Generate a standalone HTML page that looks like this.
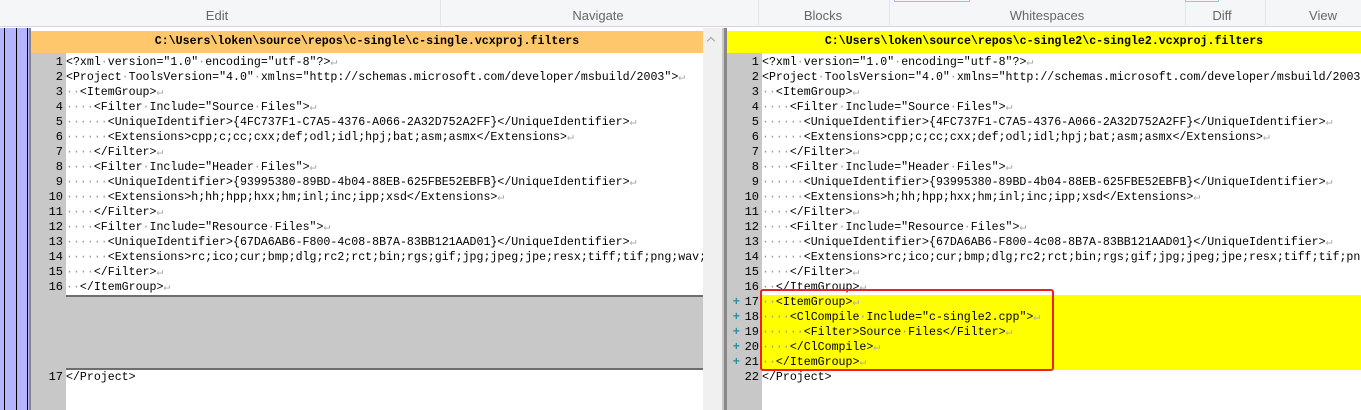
<!DOCTYPE html>
<html><head><meta charset="utf-8"><style>
*{margin:0;padding:0;box-sizing:border-box}
body{width:1361px;height:410px;overflow:hidden;background:#fff;position:relative;font-family:"Liberation Sans",sans-serif}
.tb{position:absolute;left:0;top:0;width:1361px;height:27px;background:#f5f6f7;border-bottom:1px solid #d5d5d5}
.tb span{position:absolute;top:8px;font-size:13px;color:#666;transform:translateX(-50%)}
.sep{position:absolute;top:0;width:1px;height:25px;background:#e2e3e4}
.code{position:absolute;font-family:"Liberation Mono",monospace;font-size:11.6px;line-height:15px;white-space:pre;color:#000}
.g{position:absolute;background:#c8c8c8}
.num{position:absolute;font-family:"Liberation Mono",monospace;font-size:12px;line-height:15px;text-align:right;white-space:pre;color:#000}
i{font-style:normal;color:#999}
b{font-weight:normal;color:#aaa}
.hd{position:absolute;height:22px;font-family:"Liberation Mono",monospace;font-weight:bold;font-size:11.6px;line-height:22px;text-align:center}
</style></head><body>
<div class="tb">
<span style="left:217px">Edit</span><span style="left:598px">Navigate</span><span style="left:823px">Blocks</span><span style="left:1047px">Whitespaces</span><span style="left:1222px">Diff</span><span style="left:1323px">View</span>
<div class="sep" style="left:440px"></div><div class="sep" style="left:758px"></div><div class="sep" style="left:889px"></div><div class="sep" style="left:1185px"></div><div class="sep" style="left:1265px"></div>
<div style="position:absolute;left:894px;top:0;width:76px;height:2px;border:1px solid #9fc0e8;border-top:none"></div>
<div style="position:absolute;left:1185px;top:0;width:34px;height:2px;border:1px solid #9fc0e8;border-top:none"></div>
</div>
<div style="position:absolute;left:0;top:28px;width:30px;height:382px;background:#b4b4ff"></div>
<div style="position:absolute;left:4px;top:28px;width:1px;height:382px;background:#000"></div>
<div style="position:absolute;left:16px;top:28px;width:1px;height:382px;background:#000"></div>
<div style="position:absolute;left:27px;top:28px;width:1px;height:382px;background:#000"></div>
<div style="position:absolute;left:29px;top:28px;width:2px;height:382px;background:#888"></div>
<div class="hd" style="left:31px;top:31px;width:672px;background:#ffc76b">C:\Users\loken\source\repos\c-single\c-single.vcxproj.filters</div>
<div class="g" style="left:31px;top:53px;width:35px;height:357px"></div>
<div class="g" style="left:66px;top:295px;width:637px;height:75px"></div>
<div style="position:absolute;left:66px;top:295px;width:637px;height:2px;background:#6e6e6e"></div>
<div style="position:absolute;left:66px;top:368px;width:637px;height:2px;background:#6e6e6e"></div>
<div class="num" style="left:31px;top:55px;width:32px">1
2
3
4
5
6
7
8
9
10
11
12
13
14
15
16</div>
<div class="num" style="left:31px;top:370px;width:32px">17</div>
<div style="position:absolute;left:66px;top:55px;width:637px;height:240px;overflow:hidden">
<div class="code" style="left:0;top:0">&lt;?xml<i>·</i>version="1.0"<i>·</i>encoding="utf-8"?&gt;<b>↵</b>
&lt;Project<i>·</i>ToolsVersion="4.0"<i>·</i>xmlns="http://schemas.microsoft.com/developer/msbuild/2003"&gt;<b>↵</b>
<i>··</i>&lt;ItemGroup&gt;<b>↵</b>
<i>····</i>&lt;Filter<i>·</i>Include="Source<i>·</i>Files"&gt;<b>↵</b>
<i>······</i>&lt;UniqueIdentifier&gt;{4FC737F1-C7A5-4376-A066-2A32D752A2FF}&lt;/UniqueIdentifier&gt;<b>↵</b>
<i>······</i>&lt;Extensions&gt;cpp;c;cc;cxx;def;odl;idl;hpj;bat;asm;asmx&lt;/Extensions&gt;<b>↵</b>
<i>····</i>&lt;/Filter&gt;<b>↵</b>
<i>····</i>&lt;Filter<i>·</i>Include="Header<i>·</i>Files"&gt;<b>↵</b>
<i>······</i>&lt;UniqueIdentifier&gt;{93995380-89BD-4b04-88EB-625FBE52EBFB}&lt;/UniqueIdentifier&gt;<b>↵</b>
<i>······</i>&lt;Extensions&gt;h;hh;hpp;hxx;hm;inl;inc;ipp;xsd&lt;/Extensions&gt;<b>↵</b>
<i>····</i>&lt;/Filter&gt;<b>↵</b>
<i>····</i>&lt;Filter<i>·</i>Include="Resource<i>·</i>Files"&gt;<b>↵</b>
<i>······</i>&lt;UniqueIdentifier&gt;{67DA6AB6-F800-4c08-8B7A-83BB121AAD01}&lt;/UniqueIdentifier&gt;<b>↵</b>
<i>······</i>&lt;Extensions&gt;rc;ico;cur;bmp;dlg;rc2;rct;bin;rgs;gif;jpg;jpeg;jpe;resx;tiff;tif;png;wav;mfcribbon-ms&lt;/Extensions&gt;
<i>····</i>&lt;/Filter&gt;<b>↵</b>
<i>··</i>&lt;/ItemGroup&gt;<b>↵</b></div></div>
<div class="code" style="left:66px;top:370px">&lt;/Project&gt;</div>
<div style="position:absolute;left:703px;top:28px;width:19px;height:382px;background:#f0f0f0"></div>
<div style="position:absolute;left:708px;top:38px;width:6px;height:6px;border-left:1.5px solid #a0a0a0;border-top:1.5px solid #a0a0a0;transform:rotate(45deg)"></div>
<div style="position:absolute;left:722px;top:28px;width:2px;height:382px;background:#c8c8c8"></div>
<div style="position:absolute;left:724px;top:28px;width:3px;height:382px;background:#888"></div>
<div class="hd" style="left:727px;top:31px;width:634px;background:#ffff00">C:\Users\loken\source\repos\c-single2\c-single2.vcxproj.filters</div>
<div class="g" style="left:727px;top:53px;width:35px;height:357px"></div>
<div style="position:absolute;left:762px;top:295px;width:599px;height:75px;background:#ffff00"></div>
<div class="num" style="left:727px;top:55px;width:32px">1
2
3
4
5
6
7
8
9
10
11
12
13
14
15
16
17
18
19
20
21
22</div>
<div class="num" style="left:728px;top:295px;width:12px;color:#2a8fa8;font-weight:bold">+
+
+
+
+</div>
<div style="position:absolute;left:762px;top:55px;width:599px;height:330px;overflow:hidden">
<div class="code" style="left:0;top:0">&lt;?xml<i>·</i>version="1.0"<i>·</i>encoding="utf-8"?&gt;<b>↵</b>
&lt;Project<i>·</i>ToolsVersion="4.0"<i>·</i>xmlns="http://schemas.microsoft.com/developer/msbuild/2003"&gt;<b>↵</b>
<i>··</i>&lt;ItemGroup&gt;<b>↵</b>
<i>····</i>&lt;Filter<i>·</i>Include="Source<i>·</i>Files"&gt;<b>↵</b>
<i>······</i>&lt;UniqueIdentifier&gt;{4FC737F1-C7A5-4376-A066-2A32D752A2FF}&lt;/UniqueIdentifier&gt;<b>↵</b>
<i>······</i>&lt;Extensions&gt;cpp;c;cc;cxx;def;odl;idl;hpj;bat;asm;asmx&lt;/Extensions&gt;<b>↵</b>
<i>····</i>&lt;/Filter&gt;<b>↵</b>
<i>····</i>&lt;Filter<i>·</i>Include="Header<i>·</i>Files"&gt;<b>↵</b>
<i>······</i>&lt;UniqueIdentifier&gt;{93995380-89BD-4b04-88EB-625FBE52EBFB}&lt;/UniqueIdentifier&gt;<b>↵</b>
<i>······</i>&lt;Extensions&gt;h;hh;hpp;hxx;hm;inl;inc;ipp;xsd&lt;/Extensions&gt;<b>↵</b>
<i>····</i>&lt;/Filter&gt;<b>↵</b>
<i>····</i>&lt;Filter<i>·</i>Include="Resource<i>·</i>Files"&gt;<b>↵</b>
<i>······</i>&lt;UniqueIdentifier&gt;{67DA6AB6-F800-4c08-8B7A-83BB121AAD01}&lt;/UniqueIdentifier&gt;<b>↵</b>
<i>······</i>&lt;Extensions&gt;rc;ico;cur;bmp;dlg;rc2;rct;bin;rgs;gif;jpg;jpeg;jpe;resx;tiff;tif;png;wav;mfcribbon-ms&lt;/Extensions&gt;
<i>····</i>&lt;/Filter&gt;<b>↵</b>
<i>··</i>&lt;/ItemGroup&gt;<b>↵</b>
<i>··</i>&lt;ItemGroup&gt;<b>↵</b>
<i>····</i>&lt;ClCompile<i>·</i>Include="c-single2.cpp"&gt;<b>↵</b>
<i>······</i>&lt;Filter&gt;Source<i>·</i>Files&lt;/Filter&gt;<b>↵</b>
<i>····</i>&lt;/ClCompile&gt;<b>↵</b>
<i>··</i>&lt;/ItemGroup&gt;<b>↵</b>
&lt;/Project&gt;</div></div>
<div style="position:absolute;left:760px;top:289px;width:294px;height:82px;border:2.5px solid #f02020;border-radius:3px"></div>
</body></html>
